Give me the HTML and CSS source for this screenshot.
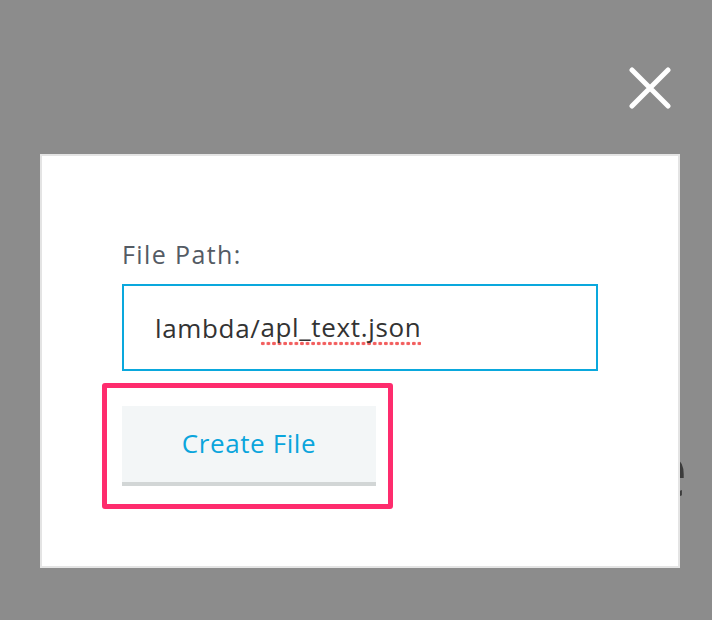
FILE: index.html
```html
<!DOCTYPE html>
<html>
<head>
<meta charset="utf-8">
<link rel="stylesheet" href="styles.css">
</head>
<body>
<div class="screen">
  <div class="bg-text">e</div>
  <button class="close" aria-label="Close">
    <svg width="42" height="42" viewBox="0 0 42 42"><path d="M3 3 L39 39 M39 3 L3 39" stroke="#fff" stroke-width="5" stroke-linecap="round" fill="none"/></svg>
  </button>
  <div class="modal">
    <label class="label">File Path:</label>
    <div class="input"><span>lambda/</span><span class="spell">apl_text.json</span></div>
    <div class="highlight">
      <div class="btn">Create File</div>
    </div>
  </div>
</div>
</body>
</html>
```
FILE: styles.css
```css
html, body {
  margin: 0;
  padding: 0;
}
body {
  background: #8c8c8c;
  font-family: "Open Sans", "Liberation Sans", sans-serif;
  width: 712px;
  height: 620px;
  overflow: hidden;
}
.screen {
  position: relative;
  width: 712px;
  height: 620px;
  padding-top: 154px;
  box-sizing: border-box;
  overflow: hidden;
}
.bg-text {
  position: absolute;
  left: 645px;
  top: 418px;
  font-size: 76px;
  line-height: 100px;
  color: #3c3c3c;
  white-space: nowrap;
}
.close {
  position: absolute;
  left: 629px;
  top: 67px;
  width: 42px;
  height: 42px;
  padding: 0;
  border: 0;
  background: transparent;
}
.close svg { display: block; }
.modal {
  position: relative;
  margin-left: 40px;
  width: 640px;
  height: 414px;
  box-sizing: border-box;
  background: #fff;
  border: 2px solid #e4e4e4;
  padding: 82px 80px 0 80px;
}
.label {
  display: block;
  font-size: 25px;
  line-height: 32px;
  letter-spacing: 1.4px;
  color: #545b64;
  margin-bottom: 14px;
}
.input {
  width: 476px;
  height: 87px;
  box-sizing: border-box;
  border: 2px solid #0aa8dd;
  padding: 0 31px;
  display: flex;
  align-items: center;
  font-size: 26px;
  letter-spacing: 0.65px;
  color: #333;
}
.spell {
  background-image: radial-gradient(circle, #f25e5e 1.6px, transparent 2.1px);
  background-size: 5.6px 5px;
  background-repeat: repeat-x;
  background-position: 0 100%;
  padding-bottom: 1px;
}
.highlight {
  margin-top: 12px;
  margin-left: -20px;
  width: 291px;
  box-sizing: border-box;
  border: 5px solid #fe2c6d;
  border-radius: 3px;
  padding: 18px 12px 18px 15px;
}
.btn {
  width: 254px;
  height: 80px;
  box-sizing: border-box;
  background: #f3f6f7;
  border-bottom: 4px solid #d2d6d6;
  color: #0aa5dc;
  font-size: 26px;
  letter-spacing: 0.6px;
  display: flex;
  align-items: center;
  justify-content: center;
  padding-bottom: 2px;
}
```
